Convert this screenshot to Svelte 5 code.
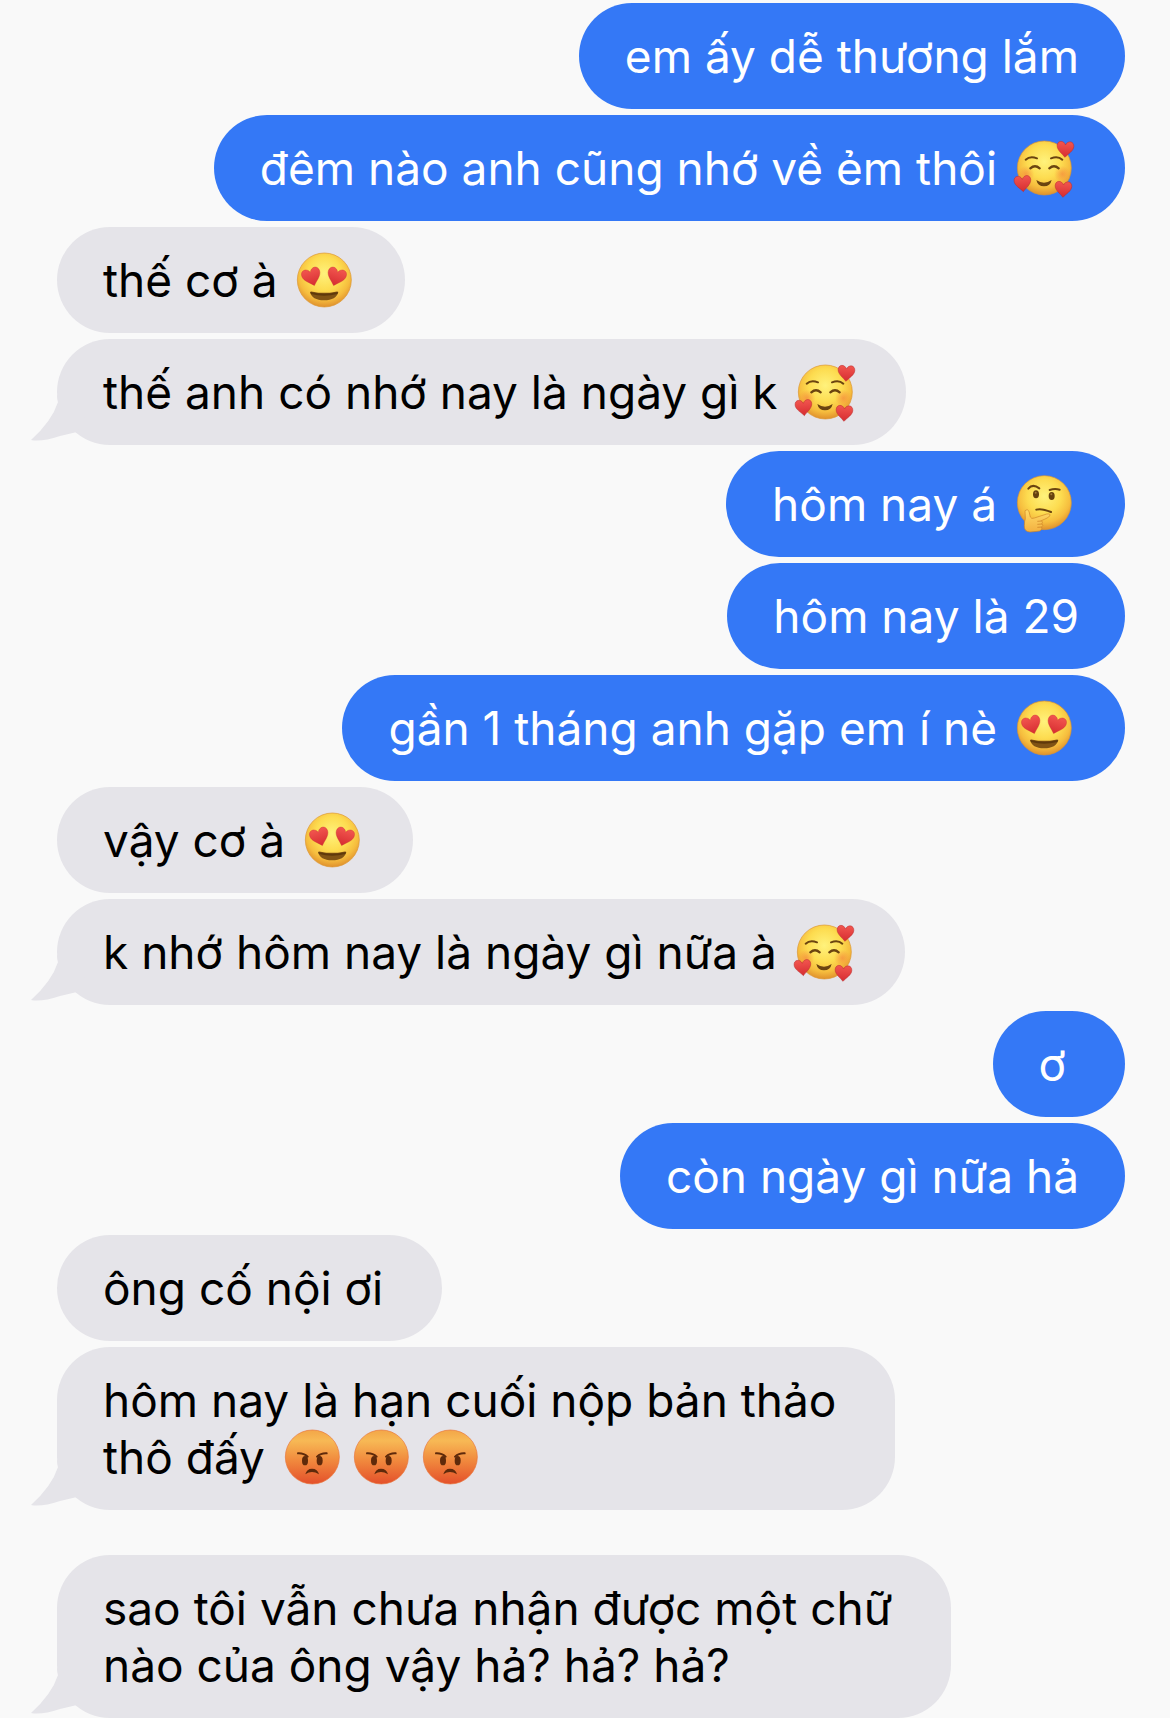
<script>
    // [name] inside a line is swapped for the matching emoji drawing
    const messages = [
        { mine: true, lines: ['em ấy dễ thương lắm'] },
        { mine: true, lines: ['đêm nào anh cũng nhớ về ẻm thôi [adore]'] },
        { lines: ['thế cơ à [love]'] },
        { lines: ['thế anh có nhớ nay là ngày gì k [adore]'], tail: true },
        { mine: true, lines: ['hôm nay á [think]'] },
        { mine: true, lines: ['hôm nay là 29'] },
        { mine: true, lines: ['gần 1 tháng anh gặp em í nè [love]'] },
        { lines: ['vậy cơ à [love]'] },
        { lines: ['k nhớ hôm nay là ngày gì nữa à [adore]'], tail: true },
        { mine: true, lines: ['ơ '] },
        { mine: true, lines: ['còn ngày gì nữa hả'] },
        { lines: ['ông cố nội ơi '] },
        { lines: ['hôm nay là hạn cuối nộp bản thảo ', 'thô đấy [angry][angry][angry]'], tail: true },
        { lines: ['sao tôi vẫn chưa nhận được một chữ ', 'nào của ông vậy hả? hả? hả?'], tail: true, later: true },
    ];

    const labels = {
        adore: 'smiling face with hearts',
        love: 'heart eyes',
        think: 'thinking face',
        angry: 'angry face',
    };

    const heart = 'M0 25C-8 15-25 5-25-9C-25-25-6-27 0-12C6-27 25-25 25-9C25 5 8 15 0 25Z';

    const split = (line) => line.split(/\[(\w+)\]/).map((value, i) => ({ value, emoji: i % 2 === 1 }));
</script>

<svg class="defs" width="0" height="0" aria-hidden="true">
    <defs>
        <radialGradient id="yellow" cx="50%" cy="38%" r="62%">
            <stop offset="0" stop-color="#fff27c" />
            <stop offset="0.5" stop-color="#fddc50" />
            <stop offset="0.78" stop-color="#f6bd3e" />
            <stop offset="1" stop-color="#e0912d" />
        </radialGradient>
        <linearGradient id="red" x1="0" y1="0" x2="0" y2="1">
            <stop offset="0" stop-color="#f2564f" />
            <stop offset="1" stop-color="#d62c31" />
        </linearGradient>
        <linearGradient id="orange" x1="0" y1="0" x2="0" y2="1">
            <stop offset="0" stop-color="#f3a648" />
            <stop offset="0.2" stop-color="#f7b955" />
            <stop offset="0.55" stop-color="#f18b3e" />
            <stop offset="1" stop-color="#e4502b" />
        </linearGradient>
        <linearGradient id="hand" x1="0" y1="0" x2="0" y2="1">
            <stop offset="0" stop-color="#ffdc68" />
            <stop offset="1" stop-color="#f3b040" />
        </linearGradient>
        <radialGradient id="blush">
            <stop offset="0" stop-color="#f5813c" stop-opacity="0.6" />
            <stop offset="1" stop-color="#f5813c" stop-opacity="0" />
        </radialGradient>
    </defs>
</svg>

{#snippet face(name)}
    <svg class="emoji" viewBox="0 0 207 171" role="img" aria-label={labels[name]}>
        {#if name === 'angry'}
            <circle cx="103" cy="84" r="81" fill="url(#orange)" stroke="#e8743a" stroke-width="2" />
            <g fill="#5f2a0b">
                <ellipse cx="81" cy="95" rx="9" ry="14" />
                <ellipse cx="125" cy="95" rx="9" ry="14" />
                <path d="M82 136Q86 119 102 119Q119 119 123 136Q112 129 102 129Q92 129 82 136Z" />
            </g>
            <g class="line dark">
                <path d="M60 73Q77 72 89 83" />
                <path d="M146 73Q129 72 117 83" />
            </g>
        {:else}
            <circle cx="103" cy={name === 'think' ? 80 : 84} r="81" fill="url(#yellow)" stroke="#dc962f" stroke-width="2" />
        {/if}

        {#if name === 'adore'}
            <circle cx="48" cy="102" r="25" fill="url(#blush)" />
            <circle cx="157" cy="102" r="25" fill="url(#blush)" />
            <g class="line">
                <path d="M47 59Q60 47 81 55" />
                <path d="M123 55Q144 47 157 59" />
                <path d="M61 85Q75 73 89 85" stroke-width="7" />
                <path d="M118 85Q132 73 146 85" stroke-width="7" />
            </g>
            <path d="M79 120Q102 136 125 120Q121 139 102 139Q83 139 79 120Z" fill="#6b4410" />
            <g fill="url(#red)" stroke="#b92a2b" stroke-width="1.5">
                <path d={heart} transform="translate(166 27) rotate(3)" />
                <path d={heart} transform="translate(38 130) rotate(-5)" />
                <path d={heart} transform="translate(160 147) rotate(3)" />
            </g>
        {:else if name === 'love'}
            <g fill="url(#red)" stroke="#cc3030" stroke-width="1">
                <path d={heart} transform="translate(65 74) rotate(-17) scale(1.12)" />
                <path d={heart} transform="translate(139 74) rotate(17) scale(1.12)" />
            </g>
            <path d="M60 120Q62 117 68 119Q102 126 137 119Q143 117 145 120C141 136 127 145 102 145C78 145 64 136 60 120Z" fill="#805315" />
            <path d="M61 120Q102 131 144 120L142 126Q102 137 63 126Z" fill="#5f390b" />
        {:else if name === 'think'}
            <ellipse cx="78" cy="55" rx="9" ry="12" fill="#65410f" />
            <ellipse cx="125" cy="60" rx="9" ry="12" fill="#65410f" />
            <circle cx="77" cy="50" r="3" fill="#a17a35" />
            <circle cx="124" cy="55" r="3" fill="#a17a35" />
            <g class="line">
                <path d="M55 38Q68 22 88 37" />
                <path d="M119 42Q134 37 149 41" />
                <path d="M79 101Q94 96 123 108" />
            </g>
            <path
                d="M45 104Q52 97 57 106L61 123Q64 130 73 126L110 114Q123 112 119 120Q116 125 94 134Q100 138 96 143Q101 149 95 153Q98 165 82 166L60 168Q42 167 43 149Q43 136 46 128Z"
                fill="url(#hand)"
                stroke="#cf8426"
                stroke-width="2"
            />
            <path d="M82 136L95 135M82 145L96 144M82 154L95 153" fill="none" stroke="#c97a20" stroke-width="2" />
        {/if}
    </svg>
{/snippet}

<main>
    <ol>
        {#each messages as { mine, lines, tail, later }}
            <li class:mine class:later>
                {#if tail}
                    <svg class="tail" viewBox="0 0 56 50" aria-hidden="true">
                        <path d="M27 0L28 7Q22 26 1 45Q12 47 30 41L47 37L56 20Z" fill="currentColor" />
                    </svg>
                {/if}
                {#each lines as line}
                    <p>{#each split(line) as part}{#if part.emoji}{@render face(part.value)}{:else}{part.value}{/if}{/each}</p>
                {/each}
            </li>
        {/each}
    </ol>
</main>

<style>
    :global(body) {
        margin: 0;
        background: #f9f9f9;
    }
    .defs {
        position: absolute;
    }
    main {
        padding: 3px 45px 0 57px;
        font-family: Inter, "Noto Sans", sans-serif;
        font-size: 46px;
        line-height: 57px;
    }
    ol {
        display: flex;
        flex-direction: column;
        align-items: flex-start;
        gap: 6px;
        margin: 0;
        padding: 0;
        list-style: none;
    }
    li {
        --bubble: #e5e4e9;
        position: relative;
        padding: 25px 46px 24px;
        border-radius: 53px;
        background: var(--bubble);
        color: #000;
    }
    .mine {
        --bubble: #3478f6;
        align-self: flex-end;
        color: #fff;
    }
    .later {
        margin-top: 39px;
    }
    p {
        margin: 0;
        white-space: pre;
    }
    .emoji {
        width: 69px;
        height: 57px;
        vertical-align: top;
        overflow: visible;
    }
    .line {
        fill: none;
        stroke: #6b4410;
        stroke-width: 6;
        stroke-linecap: round;
    }
    .dark {
        stroke: #5f2a0b;
    }
    .tail {
        position: absolute;
        left: -27px;
        bottom: 0;
        width: 56px;
        height: 50px;
        color: var(--bubble);
    }
</style>
